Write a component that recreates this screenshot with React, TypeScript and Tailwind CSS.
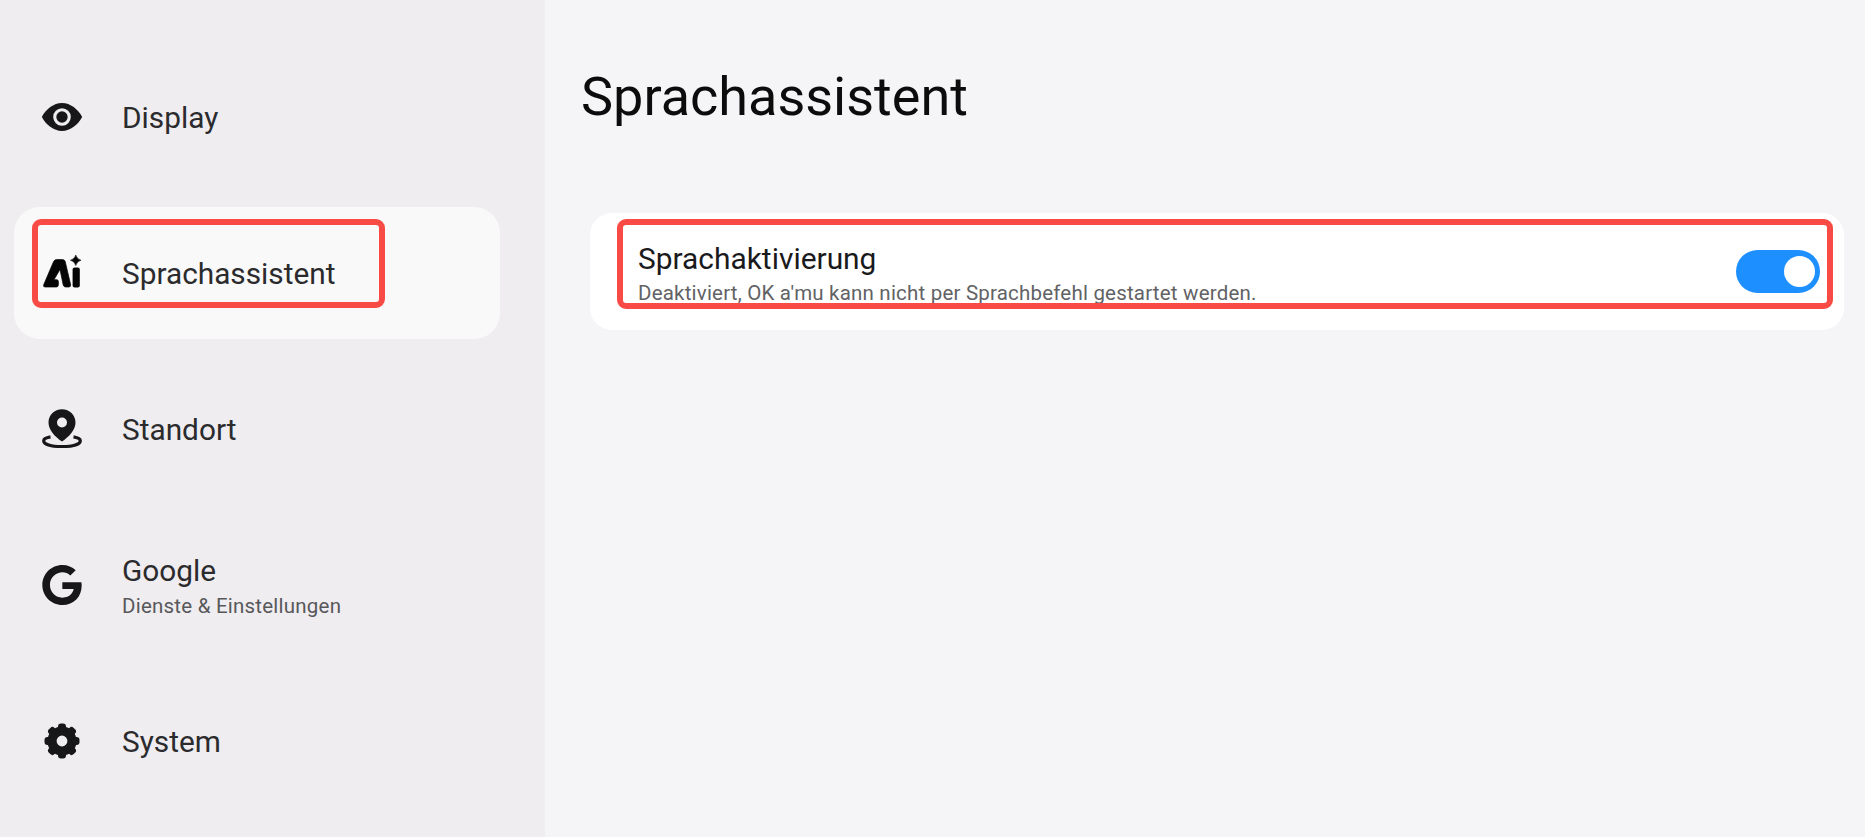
import type { ReactNode } from "react";

function EyeIcon() {
  return (
    <svg width="44" height="44" viewBox="0 0 24 24" fill="#17171a">
      <path d="M12 4.400C7.400 4.400 3.200 7.800 1 12c2.200 4.200 6.400 7.600 11 7.600S20.800 16.200 23 12C20.800 7.800 16.600 4.400 12 4.400zM12 16.800a4.800 4.800 0 1 1 0-9.600 4.800 4.800 0 0 1 0 9.600zm0-1.700a3.100 3.100 0 1 0 0-6.200 3.100 3.100 0 0 0 0 6.200z" fillRule="evenodd" />
    </svg>
  );
}

function AiIcon() {
  return (
    <svg className="mb-[3px]" width="38" height="33" viewBox="0 0 38 33" fill="#050505">
      <path
        stroke="#050505"
        strokeWidth=".7"
        strokeLinejoin="round"
        d="M13.500 4.600H19.500Q21.500 4.600 22.200 6.400L27.600 29.500Q28 32 25.800 32H22.700Q20.700 32 20.200 30L17 14.500L11 24.700H13.800Q15.400 24.700 15.400 26.700V29.800Q15.400 32 13.400 32H2Q-.1 32 .8 29.500L10.500 6.700Q11.500 4.600 13.500 4.600Z"
      />
      <rect x="29.600" y="12.600" width="7.200" height="19.800" rx="2" />
      <path d="M32.800 0Q33.800 4 38 5.200Q33.800 6.400 32.800 10.600Q31.800 6.400 27.400 5.200Q31.800 4 32.800 0Z" stroke="#050505" strokeWidth=".5" />
    </svg>
  );
}

function PinIcon() {
  return (
    <svg width="40" height="40" viewBox="0 0 40 40" fill="#17171a">
      <path
        fillRule="evenodd"
        d="M20 .2C12.500.2 6.500 6 6.500 13.400C6.500 21 13 27.500 20 32.600C27 27.500 33.500 21 33.500 13.400C33.500 6 27.500.2 20 .2ZM20 18.500A5 5 0 1 1 20 8.500A5 5 0 0 1 20 18.500Z"
      />
      <path d="M8.500 27.800C4 28.600 1.700 30 1.700 31.700C1.700 35.200 9 37.500 20 37.500S38.300 35.200 38.300 31.700C38.300 30 36 28.600 31.500 27.800" fill="none" stroke="#17171a" strokeWidth="3.200" />
    </svg>
  );
}

function GoogleIcon() {
  return (
    <svg width="40" height="40" viewBox="0 8 488 496" fill="#17171a">
      <path d="M488 261.800C488 403.300 391.100 504 248 504 110.800 504 0 393.200 0 256S110.800 8 248 8c66.800 0 123 24.500 166.300 64.900l-67.500 64.900C258.500 52.600 94.300 116.600 94.300 256c0 86.500 69.100 156.600 153.700 156.600 98.200 0 135-70.400 140.800-106.900H248v-85.300h236.100c2.300 12.700 3.900 24.900 3.900 41.400z" />
    </svg>
  );
}

const teeth = [0, 45, 90, 135, 180, 225, 270, 315];

function GearIcon() {
  return (
    <svg width="36" height="36" viewBox="-18 -18 36 36" fill="#17171a">
      <circle r="10" fill="none" stroke="#17171a" strokeWidth="9.200" />
      {teeth.map((angle) => (
        <rect key={angle} x="-4" y="-17.500" width="8" height="8" rx="3" transform={`rotate(${angle})`} />
      ))}
    </svg>
  );
}

interface NavItemProps {
  icon: ReactNode;
  label: string;
  detail?: string;
  active?: boolean;
}

function NavItem({ icon, label, detail, active }: NavItemProps) {
  return (
    <li className={`relative flex h-[132px] items-center rounded-[26px] ${active ? "bg-[#f9f9f9]" : ""}`}>
      <span className="ml-[24px] flex w-12 shrink-0 items-center justify-center">{icon}</span>
      <div className={`ml-[36px] ${detail ? "pt-[4px]" : "pt-[2px]"}`}>
        <div className="text-[29.800px] leading-[38px] text-[#2b2b2e]">{label}</div>
        {detail && <div className="text-[20.500px] leading-[32px] tracking-[0.220px] text-[#58585b]">{detail}</div>}
      </div>
      {active && <span className="absolute left-[18px] top-[12px] h-[89px] w-[353px] rounded-[9px] border-[6px] border-[#f94b46]" />}
    </li>
  );
}

function Toggle() {
  return (
    <button role="switch" aria-checked="true" className="flex h-[43px] w-[84px] items-center justify-end rounded-full bg-[#1e8fff] pr-[5px]">
      <span className="size-[31px] rounded-full bg-white" />
    </button>
  );
}

export default function App() {
  return (
    <div className="flex h-[837px] w-full overflow-hidden bg-[#f5f5f7] font-['Roboto',sans-serif]">
      <nav className="w-[545px] shrink-0 bg-[#efedf0] pl-[14px] pr-[45px] pt-[51px]">
        <ul className="flex flex-col gap-6">
          <NavItem icon={<EyeIcon />} label="Display" />
          <NavItem icon={<AiIcon />} label="Sprachassistent" active />
          <NavItem icon={<PinIcon />} label="Standort" />
          <NavItem icon={<GoogleIcon />} label="Google" detail="Dienste & Einstellungen" />
          <NavItem icon={<GearIcon />} label="System" />
        </ul>
      </nav>
      <main className="flex-1 pl-[45px] pr-[21px] pt-[65px]">
        <h1 className="-ml-[9px] text-[54px] leading-[64px] text-[#0c0c0d]">Sprachassistent</h1>
        <section className="relative mt-[84px] flex h-[117px] items-start justify-between rounded-[22px] bg-white pl-[48px] pr-[24px]">
          <div className="pt-[27px]">
            <div className="text-[29.900px] leading-[38px] text-[#1a1a1c]">Sprachaktivierung</div>
            <div className="text-[20.500px] leading-[31px] tracking-[0.200px] text-[#626265]">Deaktiviert, OK a'mu kann nicht per Sprachbefehl gestartet werden.</div>
          </div>
          <div className="pt-[37px]">
            <Toggle />
          </div>
          <span className="absolute left-[27px] top-[6px] h-[90px] w-[1216px] rounded-[9px] border-[6px] border-[#f94b46]" />
        </section>
      </main>
    </div>
  );
}
